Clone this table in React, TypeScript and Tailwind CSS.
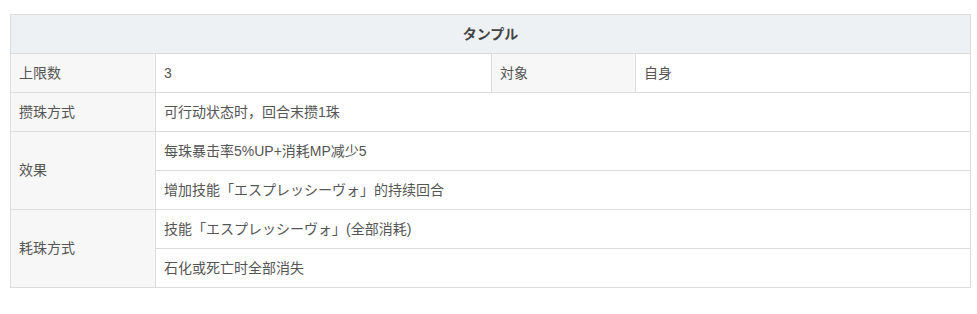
const cell = "border border-[#dcdcdc] px-2 h-[39px] align-middle";
const label = `${cell} bg-[#f7f7f7]`;

export default function App() {
  return (
    <div className="bg-white pl-[10px] pt-[14px] h-[314px] font-['Liberation_Sans','Noto_Sans_CJK_SC',sans-serif] text-[14px] text-[#555]">
      <table className="w-[961px] border-collapse table-fixed">
        <colgroup>
          <col className="w-[145px]" />
          <col className="w-[336px]" />
          <col className="w-[144px]" />
          <col />
        </colgroup>
        <tbody>
          <tr>
            <th colSpan={4} className={`${cell} bg-[#eef1f4] text-center font-bold text-[#444]`}>
              タンプル
            </th>
          </tr>
          <tr>
            <td className={label}>上限数</td>
            <td className={cell}>3</td>
            <td className={label}>対象</td>
            <td className={cell}>自身</td>
          </tr>
          <tr>
            <td className={label}>攒珠方式</td>
            <td colSpan={3} className={cell}>可行动状态时，回合末攒1珠</td>
          </tr>
          <tr>
            <td rowSpan={2} className={label}>效果</td>
            <td colSpan={3} className={cell}>每珠暴击率5%UP+消耗MP减少5</td>
          </tr>
          <tr>
            <td colSpan={3} className={cell}>增加技能「エスプレッシーヴォ」的持续回合</td>
          </tr>
          <tr>
            <td rowSpan={2} className={label}>耗珠方式</td>
            <td colSpan={3} className={cell}>技能「エスプレッシーヴォ」(全部消耗)</td>
          </tr>
          <tr>
            <td colSpan={3} className={cell}>石化或死亡时全部消失</td>
          </tr>
        </tbody>
      </table>
    </div>
  );
}
